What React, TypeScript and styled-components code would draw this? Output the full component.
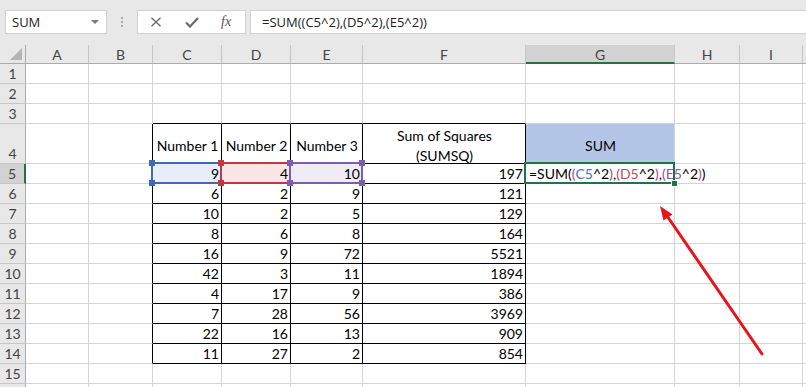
import React from 'react';
import styled, { createGlobalStyle } from 'styled-components';

const GlobalStyle = createGlobalStyle`
  *, *::before, *::after { box-sizing: border-box; }
  html, body { margin: 0; padding: 0; background: #ffffff; overflow: hidden; }
`;

const GRID = '#d4d4d4';
const BLACK = '#000000';
const GREEN = '#217346';

const Wrapper = styled.div`
  position: relative;
  width: 806px;
  height: 387px;
  overflow: hidden;
  background: #ffffff;
`;

const Strip = styled.div`
  display: flex;
  align-items: flex-start;
  height: 45px;
  padding: 10px 0 0 5px;
  background: #e8e8e8;
  font-family: 'Open Sans', 'Noto Sans', sans-serif;
  font-size: 13px;
  color: #222;
`;

const NameBox = styled.div`
  display: flex;
  align-items: center;
  justify-content: space-between;
  width: 102px;
  height: 24px;
  padding: 0 7px 0 6px;
  background: #fff;
  border: 1px solid #d0d0d0;
`;

const Caret = styled.span`
  width: 0;
  height: 0;
  border-left: 4px solid transparent;
  border-right: 4px solid transparent;
  border-top: 4px solid #7a7a7a;
`;

const Grip = styled.div`
  display: flex;
  flex-direction: column;
  align-items: center;
  justify-content: center;
  gap: 2px;
  width: 30px;
  height: 24px;
  & > i {
    width: 2px;
    height: 2px;
    background: #a8a8a8;
  }
`;

const FxBox = styled.div`
  display: flex;
  align-items: center;
  gap: 23px;
  width: 109px;
  height: 24px;
  padding-left: 12px;
  background: #fff;
  border: 1px solid #d0d0d0;
`;

const Fx = styled.span`
  font-family: 'Liberation Serif', 'DejaVu Serif', serif;
  font-style: italic;
  font-size: 14px;
  color: #555;
  margin-left: -1px;
`;

const FormulaInput = styled.div`
  flex: 1;
  display: flex;
  align-items: center;
  height: 24px;
  margin-left: 4px;
  padding-left: 11px;
  background: #fff;
  border: 1px solid #d0d0d0;
  border-right: none;
  white-space: nowrap;
`;

const Sheet = styled.div`
  display: grid;
  grid-template-columns: 26px 63px 64px 69px 69px 72px 163px 149px 65px 63px 1fr;
  grid-template-rows: 19px repeat(3, 20px) 40px repeat(12, 20px);
  font-family: 'Lato', 'Liberation Sans', sans-serif;
  font-size: 14px;
  color: #000;
`;

const ColHead = styled.div<{ $sel?: boolean }>`
  display: flex;
  align-items: center;
  justify-content: center;
  background: ${p => (p.$sel ? '#d2d2d2' : '#e8e8e8')};
  border-right: 1px solid #c6c6c6;
  border-bottom: ${p => (p.$sel ? `2px solid ${GREEN}` : '1px solid #ababab')};
  color: #444;
  padding-top: ${p => (p.$sel ? '1px' : '0')};
`;

const Corner = styled.div`
  position: relative;
  background: #e8e8e8;
  border-right: 1px solid #ababab;
  border-bottom: 1px solid #ababab;
  &::after {
    content: '';
    position: absolute;
    right: 3px;
    bottom: 3px;
    width: 0;
    height: 0;
    border-left: 12px solid transparent;
    border-bottom: 12px solid #b4b4b4;
  }
`;

const RowHead = styled.div<{ $sel?: boolean; $tall?: boolean }>`
  display: flex;
  align-items: ${p => (p.$tall ? 'flex-end' : 'center')};
  justify-content: center;
  padding-bottom: ${p => (p.$tall ? '1px' : '0')};
  background: ${p => (p.$sel ? '#d2d2d2' : '#e8e8e8')};
  border-right: ${p => (p.$sel ? `2px solid ${GREEN}` : '1px solid #ababab')};
  border-bottom: 1px solid #c6c6c6;
  color: #444;
`;

const Cell = styled.div<{
  $r: string;
  $b: string;
  $align?: 'left' | 'right' | 'center';
  $bg?: string;
}>`
  display: flex;
  align-items: ${p => (p.$align === 'center' ? 'center' : 'flex-end')};
  justify-content: ${p =>
    p.$align === 'right' ? 'flex-end' : p.$align === 'center' ? 'center' : 'flex-start'};
  text-align: center;
  padding: ${p => (p.$align === 'center' ? '4px 2px 0 3px' : '0 2px 0 3px')};
  line-height: 19px;
  white-space: nowrap;
  background: ${p => p.$bg || 'transparent'};
  border-right: 1px solid ${p => p.$r};
  border-bottom: 1px solid ${p => p.$b};
`;

const HeadText = styled.span`
  white-space: normal;
  line-height: 20px;
`;

const RefCell = styled(Cell)`
  position: relative;
`;

const RangeBox = styled.div<{ $c: string }>`
  position: absolute;
  top: -2px;
  left: -2px;
  right: -1px;
  bottom: -1px;
  border: 2px solid ${p => p.$c};
  z-index: 2;
  pointer-events: none;
`;

const Knob = styled.span<{ $c: string; $v: 'top' | 'bottom'; $h: 'left' | 'right' }>`
  position: absolute;
  ${p => p.$v}: -4px;
  ${p => p.$h}: -4px;
  width: 6px;
  height: 6px;
  background: ${p => p.$c};
`;

const FillHandle = styled.span`
  position: absolute;
  right: -5px;
  bottom: -5px;
  width: 7px;
  height: 7px;
  background: ${GREEN};
  border: 1px solid #fff;
`;

const Ref = styled.span<{ $c: string }>`
  color: ${p => p.$c};
`;

const Caretline = styled.span`
  display: inline-block;
  width: 1px;
  height: 17px;
  margin-left: 3px;
  background: #000;
  align-self: center;
`;

const ArrowLayer = styled.svg`
  position: absolute;
  left: 0;
  top: 0;
  width: 806px;
  height: 387px;
  pointer-events: none;
  z-index: 5;
`;

const LETTERS = ['A', 'B', 'C', 'D', 'E', 'F', 'G', 'H', 'I', ''];

const C = [9, 6, 10, 8, 16, 42, 4, 7, 22, 11];
const D = [4, 2, 2, 6, 9, 3, 17, 28, 16, 27];
const E = [10, 9, 5, 8, 72, 11, 9, 56, 13, 2];
const F = [197, 121, 129, 164, 5521, 1894, 386, 3969, 909, 854];

const BLUE = '#4472c4';
const RED = '#c0504d';
const PURPLE = '#8064a2';
const PAREN = '#a6477e';

const rangeStyle: Record<number, { c: string; fill: string }> = {
  3: { c: '#3f6ab8', fill: '#e8eef9' },
  4: { c: '#c0393e', fill: '#fbe6e7' },
  5: { c: '#7c5dae', fill: '#efebf7' },
};

function borders(row: number, col: number) {
  const r = row >= 4 && row <= 14 && col >= 2 && col <= 6 ? BLACK : GRID;
  const b = row >= 3 && row <= 14 && col >= 3 && col <= 6 ? BLACK : GRID;
  return { r, b };
}

const headers: Record<number, React.ReactNode> = {
  3: 'Number 1',
  4: 'Number 2',
  5: 'Number 3',
  6: (
    <>
      Sum of Squares
      <br />
      (SUMSQ)
    </>
  ),
  7: 'SUM',
};

function renderCell(row: number, col: number) {
  const { r, b } = borders(row, col);
  const key = `${row}-${col}`;
  if (row === 4 && headers[col]) {
    return (
      <Cell key={key} $r={r} $b={b} $align="center" $bg={col === 7 ? '#b4c6e7' : undefined}>
        <HeadText>{headers[col]}</HeadText>
      </Cell>
    );
  }
  if (row >= 5 && row <= 14 && col >= 3 && col <= 6) {
    const i = row - 5;
    const val = [C, D, E, F][col - 3][i];
    if (row === 5 && rangeStyle[col]) {
      const st = rangeStyle[col];
      return (
        <RefCell key={key} $r={r} $b={b} $align="right" $bg={st.fill}>
          {val}
          <RangeBox $c={st.c}>
            <Knob $c={st.c} $v="top" $h="left" />
            <Knob $c={st.c} $v="top" $h="right" />
            <Knob $c={st.c} $v="bottom" $h="left" />
            <Knob $c={st.c} $v="bottom" $h="right" />
          </RangeBox>
        </RefCell>
      );
    }
    return (
      <Cell key={key} $r={r} $b={b} $align="right">
        {val}
      </Cell>
    );
  }
  if (row === 5 && col === 7) {
    return (
      <RefCell key={key} $r={r} $b={b} $align="left">
        =SUM(<Ref $c={PAREN}>(</Ref>
        <Ref $c={BLUE}>C5</Ref>^2<Ref $c={PAREN}>)</Ref>,<Ref $c={PAREN}>(</Ref>
        <Ref $c={RED}>D5</Ref>^2<Ref $c={PAREN}>)</Ref>,<Ref $c={PAREN}>(</Ref>
        <Ref $c={PURPLE}>E5</Ref>^2<Ref $c={PAREN}>)</Ref>)
        <Caretline />
        <RangeBox $c={GREEN}>
          <FillHandle />
        </RangeBox>
      </RefCell>
    );
  }
  return <Cell key={key} $r={r} $b={b} />;
}

export default function App() {
  const rows = Array.from({ length: 16 }, (_, i) => i + 1);
  return (
    <Wrapper>
      <GlobalStyle />
      <Strip>
        <NameBox>
          <span>SUM</span>
          <Caret />
        </NameBox>
        <Grip>
          <i />
          <i />
          <i />
        </Grip>
        <FxBox>
          <svg width="12" height="10" viewBox="0 0 12 10">
            <path d="M1.5 0.8 L10.5 9.2 M10.5 0.8 L1.5 9.2" stroke="#6b6b6b" strokeWidth="1.4" fill="none" />
          </svg>
          <svg width="14" height="11" viewBox="0 0 14 11">
            <path d="M1 5.5 L5 9.5 L13 1" stroke="#6b6b6b" strokeWidth="2.2" fill="none" />
          </svg>
          <Fx>fx</Fx>
        </FxBox>
        <FormulaInput>=SUM((C5^2),(D5^2),(E5^2))</FormulaInput>
      </Strip>
      <Sheet>
        <Corner />
        {LETTERS.map((l, i) => (
          <ColHead key={`h${i}`} $sel={l === 'G'}>
            {l}
          </ColHead>
        ))}
        {rows.map(row => (
          <React.Fragment key={`r${row}`}>
            <RowHead $sel={row === 5} $tall={row === 4}>
              {row <= 15 ? row : ''}
            </RowHead>
            {Array.from({ length: 10 }, (_, c) => renderCell(row, c + 1))}
          </React.Fragment>
        ))}
      </Sheet>
      <ArrowLayer viewBox="0 0 806 387">
        <line x1="762" y1="354" x2="665" y2="213" stroke="#e8141a" strokeWidth="3" strokeLinecap="round" />
        <polygon points="660,206 672.5,214.5 663.5,220.5" fill="#e8141a" />
      </ArrowLayer>
    </Wrapper>
  );
}
